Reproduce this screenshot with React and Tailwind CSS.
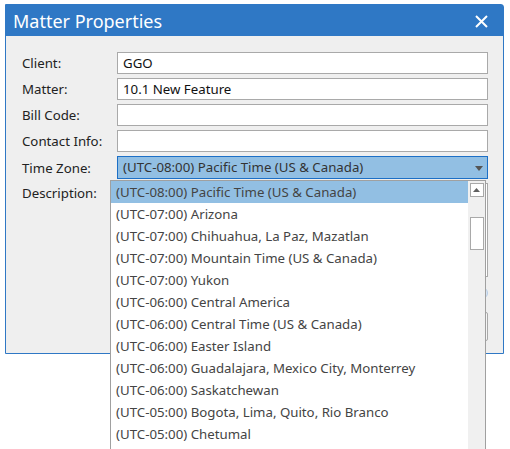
import React from 'react';

const fields = [
    { label: 'Client:', value: 'GGO' },
    { label: 'Matter:', value: '10.1 New Feature' },
    { label: 'Bill Code:', value: '' },
    { label: 'Contact Info:', value: '' },
];

const zones = [
    '(UTC-08:00) Pacific Time (US & Canada)',
    '(UTC-07:00) Arizona',
    '(UTC-07:00) Chihuahua, La Paz, Mazatlan',
    '(UTC-07:00) Mountain Time (US & Canada)',
    '(UTC-07:00) Yukon',
    '(UTC-06:00) Central America',
    '(UTC-06:00) Central Time (US & Canada)',
    '(UTC-06:00) Easter Island',
    '(UTC-06:00) Guadalajara, Mexico City, Monterrey',
    '(UTC-06:00) Saskatchewan',
    '(UTC-05:00) Bogota, Lima, Quito, Rio Branco',
    '(UTC-05:00) Chetumal',
];

export default function App() {
    return (
        <div className="relative h-[449px] w-[510px] overflow-hidden bg-white pl-[5px] pt-[4px] font-['Noto_Sans',sans-serif] text-[13.25px]">
            {/* dialog */}
            <div className="h-[350px] w-[499px] rounded-tr-[3px] border border-[#2f78c5] bg-[#efefef]">
                <div className="flex h-[31px] items-center justify-between bg-[#2f78c5] pl-[7px] pr-[15px] pt-[1px] text-white">
                    <span className="text-[18px] leading-none">Matter Properties</span>
                    <svg width="13" height="13" viewBox="0 0 13 13" stroke="white" strokeWidth="2">
                        <path d="M1 1 L12 12 M12 1 L1 12" />
                    </svg>
                </div>
                <div className="flex flex-col gap-[4px] pl-[16px] pr-[15px] pt-[16px]">
                    {fields.map((f) => (
                        <div key={f.label} className="flex items-center">
                            <span className="w-[95px] pt-[2px] text-[#222]">{f.label}</span>
                            <div className="flex h-[22px] flex-1 items-center border border-[#a9a9a9] bg-white px-[5px] pt-[1px] text-[#111]">
                                {f.value}
                            </div>
                        </div>
                    ))}
                    <div className="flex items-center">
                        <span className="w-[95px] pt-[2px] text-[#222]">Time Zone:</span>
                        <div className="flex h-[23px] flex-1 items-center justify-between border border-[#1c6fc6] bg-[#92bfe3] pl-[5px] pr-[4px] pt-[1px] text-[#333]">
                            <span>(UTC-08:00) Pacific Time (US &amp; Canada)</span>
                            <svg width="8" height="5" viewBox="0 0 8 5" fill="#555">
                                <path d="M0 0 H8 L4 5 Z" />
                            </svg>
                        </div>
                    </div>
                    <div className="flex items-start">
                        <span className="w-[95px] pt-[1px] text-[#222]">Description:</span>
                        <div className="h-[94px] flex-1 border border-[#a9a9a9] bg-white"></div>
                    </div>
                    <div className="flex h-[24px] items-center justify-end">
                        <span className="h-[12px] w-[12px] rounded-full border border-[#b7cde6] bg-[#dbe7f4]"></span>
                    </div>
                    <div className="flex justify-end pt-[3px]">
                        <div className="h-[29px] w-[80px] rounded-[2px] border border-[#a9a9a9] bg-[#f5f5f5]"></div>
                    </div>
                </div>
            </div>

            {/* open time zone list */}
            <div className="absolute left-[110px] top-[180px] flex h-[280px] w-[376px] border border-[#a0a0a0] bg-white">
                <ul className="flex-1 text-[#444]">
                    {zones.map((z, i) => (
                        <li
                            key={z}
                            className={
                                i === 0
                                    ? 'flex h-[22px] items-center whitespace-nowrap bg-[#92bfe3] pl-[5px] pt-[2px]'
                                    : 'flex h-[22px] items-center whitespace-nowrap pl-[5px] pt-[2px]'
                            }
                        >
                            {z}
                        </li>
                    ))}
                </ul>
                <div className="flex w-[17px] flex-col items-center bg-[#f0f0f0] pt-[2px]">
                    <div className="flex h-[14px] w-[14px] items-center justify-center border border-[#a9a9a9] bg-white">
                        <svg width="7" height="4" viewBox="0 0 7 4" fill="#606060">
                            <path d="M0 4 H7 L3.5 0 Z" />
                        </svg>
                    </div>
                    <div className="mt-[20px] h-[33px] w-[14px] border border-[#a9a9a9] bg-white"></div>
                </div>
            </div>
        </div>
    );
}
